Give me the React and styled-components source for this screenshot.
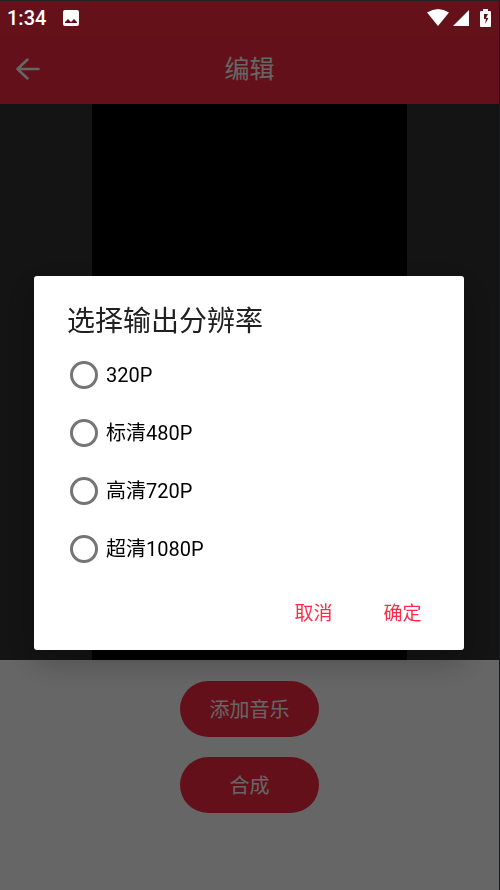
import React from "react";
import styled, { createGlobalStyle } from "styled-components";

const GlobalStyle = createGlobalStyle`
  *, *::before, *::after { box-sizing: border-box; }
  body {
    margin: 0;
    background: #666;
    font-family: Roboto, "Noto Sans CJK SC", sans-serif;
  }
  button, input { font: inherit; }
`;

const Screen = styled.div`
  display: flex;
  flex-direction: column;
  min-height: 100vh;
  border-top: 1px solid #23232d;
  border-right: 1px solid #191923;
  background: #fff;
`;

const StatusBar = styled.div`
  position: relative;
  z-index: 3;
  display: flex;
  align-items: center;
  justify-content: space-between;
  height: 35px;
  padding: 0 8px 2px 7px;
  background: #64111a;
  color: #fff;
`;

const StatusGroup = styled.div`
  display: flex;
  align-items: center;
  gap: ${({ $gap }) => $gap}px;
`;

const Clock = styled.time`
  font-size: 20px;
  font-weight: 500;
  line-height: 24px;
`;

const Header = styled.header`
  display: grid;
  grid-template-columns: 55px 1fr 55px;
  align-items: center;
  height: 68px;
  background: #fa2a41;
  color: #fff;
`;

const BackButton = styled.button`
  display: grid;
  place-items: center;
  height: 56px;
  padding: 0 0 2px;
  border: 0;
  background: none;
  color: inherit;
`;

const PageTitle = styled.h1`
  margin: 0;
  font-size: 25px;
  font-weight: 400;
  line-height: 36px;
  text-align: center;
`;

const Stage = styled.div`
  display: flex;
  justify-content: center;
  height: 556px;
  background: #323232;
`;

const Video = styled.div`
  width: 63%;
  background: #000;
`;

const Actions = styled.main`
  display: flex;
  flex: 1;
  flex-direction: column;
  align-items: center;
  gap: 20px;
  padding: 21px 0;
`;

const PillButton = styled.button`
  width: 139px;
  height: 56px;
  padding: 0 0 2px;
  border: 0;
  border-radius: 28px;
  background: #fa2a41;
  color: #fff;
  font-size: 20px;
`;

const Scrim = styled.div`
  position: fixed;
  inset: 1px 1px 0 0;
  z-index: 2;
  display: flex;
  align-items: center;
  padding: 35px 35px 0 34px;
  background: rgba(0, 0, 0, 0.6);
`;

const Dialog = styled.form`
  flex: 1;
  padding: 26px 34px 14px 33px;
  border-radius: 3px;
  background: #fff;
  box-shadow: 0 12px 32px rgba(0, 0, 0, 0.25);
`;

const DialogTitle = styled.h2`
  margin: 0 0 4px;
  color: #212121;
  font-size: 28px;
  font-weight: 400;
  line-height: 40px;
`;

const Options = styled.div`
  display: flex;
  flex-direction: column;
`;

const Option = styled.label`
  display: flex;
  align-items: center;
  gap: 8px;
  height: 58px;
  padding-left: 3px;
  color: #000;
  font-size: 20px;
  line-height: 30px;
`;

const Radio = styled.input`
  appearance: none;
  width: 28px;
  height: 28px;
  margin: 0;
  border: 3px solid #757575;
  border-radius: 50%;
  &:checked {
    border-color: #ff2a48;
    background: radial-gradient(#ff2a48 45%, transparent 50%);
  }
`;

const DialogActions = styled.div`
  display: flex;
  justify-content: flex-end;
  margin: 8px -17px 0 0;
`;

const TextButton = styled.button`
  width: 89px;
  height: 50px;
  padding: 0;
  border: 0;
  background: none;
  color: #ff2a48;
  font-size: 19px;
`;

const resolutions = ["320P", "标清480P", "高清720P", "超清1080P"];

const PictureIcon = () => (
  <svg width="16" height="16" viewBox="0 0 16 16" aria-hidden="true">
    <path fill="#fff" fillRule="evenodd" d="M2 0h12a2 2 0 0 1 2 2v12a2 2 0 0 1-2 2H2a2 2 0 0 1-2-2V2a2 2 0 0 1 2-2ZM2 13h12v-1l-3-3-3 3-3-3-3 3Z" />
  </svg>
);

const WifiIcon = () => (
  <svg width="22" height="17" viewBox="0 0 22 17" aria-hidden="true">
    <path fill="#fff" d="M0 3.500Q11-3.500 22 3.500L11 17Z" />
  </svg>
);

const SignalIcon = () => (
  <svg width="16" height="16" viewBox="0 0 16 16" aria-hidden="true">
    <path fill="#fff" d="M16 0v16H0Z" />
  </svg>
);

const BatteryIcon = () => (
  <svg width="11" height="18" viewBox="0 0 11 18" aria-hidden="true">
    <path fill="#fff" fillRule="evenodd" d="M3 0h5v2h2a1 1 0 0 1 1 1v14a1 1 0 0 1-1 1H1a1 1 0 0 1-1-1V3a1 1 0 0 1 1-1h2ZM4 5v5h2l-1 5 3.500-6H6l2-4Z" />
  </svg>
);

const BackIcon = () => (
  <svg width="24" height="22" viewBox="0 0 24 22" fill="none" stroke="currentColor" strokeWidth="2.500" strokeLinecap="round" strokeLinejoin="round" aria-hidden="true">
    <path d="M11.500 1.500 1.500 11 11.500 20.500M1.500 11H22.500" />
  </svg>
);

export default function App() {
  return (
    <>
      <GlobalStyle />
      <Screen>
        <StatusBar>
          <StatusGroup $gap={17}>
            <Clock>1:34</Clock>
            <PictureIcon />
          </StatusGroup>
          <StatusGroup $gap={4}>
            <WifiIcon />
            <StatusGroup $gap={11}>
              <SignalIcon />
              <BatteryIcon />
            </StatusGroup>
          </StatusGroup>
        </StatusBar>
        <Header>
          <BackButton type="button" aria-label="返回">
            <BackIcon />
          </BackButton>
          <PageTitle>编辑</PageTitle>
        </Header>
        <Stage>
          <Video />
        </Stage>
        <Actions>
          <PillButton type="button">添加音乐</PillButton>
          <PillButton type="button">合成</PillButton>
        </Actions>
      </Screen>
      <Scrim>
        <Dialog role="dialog" aria-modal="true" aria-labelledby="resolution-title">
          <DialogTitle id="resolution-title">选择输出分辨率</DialogTitle>
          <Options role="radiogroup" aria-labelledby="resolution-title">
            {resolutions.map((label) => (
              <Option key={label}>
                <Radio type="radio" name="resolution" value={label} />
                {label}
              </Option>
            ))}
          </Options>
          <DialogActions>
            <TextButton type="button">取消</TextButton>
            <TextButton type="button">确定</TextButton>
          </DialogActions>
        </Dialog>
      </Scrim>
    </>
  );
}
